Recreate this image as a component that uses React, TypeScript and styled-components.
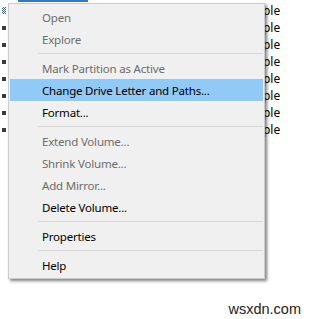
import React from "react";
import styled, { createGlobalStyle } from "styled-components";

const Global = createGlobalStyle`
  html, body { margin: 0; padding: 0; background: #ffffff; }
  body { width: 312px; height: 319px; overflow: hidden; font-family: "Noto Sans", "Open Sans", sans-serif; }
`;

const Page = styled.div`
  position: relative;
  width: 312px;
  height: 319px;
  background: #ffffff;
  overflow: hidden;
`;

const ListTop = styled.div`
  height: 2px;
  display: flex;
`;

const SelectedStrip = styled.div`
  margin-left: 18px;
  width: 70px;
  height: 2px;
  background: #2f7bcc;
`;

const Row = styled.div`
  height: 17px;
  display: flex;
  align-items: center;
  font-size: 12px;
  color: #000;
`;

const RowIcon = styled.div<{ $dithered?: boolean }>`
  margin-left: 2px;
  width: 4px;
  height: ${(p) => (p.$dithered ? "7px" : "4px")};
  background: ${(p) =>
    p.$dithered
      ? "repeating-conic-gradient(#3a5fa8 0 25%, #ffffff 0 50%) 0 0 / 2px 2px"
      : "#3c3c3c"};
`;

const RowText = styled.span`
  margin-left: 236px;
  white-space: nowrap;
`;

const Menu = styled.div`
  position: absolute;
  left: 8px;
  top: 3px;
  width: 257px;
  box-sizing: border-box;
  background: #f0f0f0;
  border: 1px solid #cdcdcd;
  padding: 2px 1px 2px 1px;
  box-shadow: 2px 2px 3px rgba(0, 0, 0, 0.5);
`;

const Item = styled.div<{ $disabled?: boolean; $active?: boolean }>`
  height: 22px;
  display: flex;
  align-items: center;
  padding-left: 32px;
  font-size: 11.5px;
  letter-spacing: -0.2px;
  color: ${(p) => (p.$disabled ? "#6d6d6d" : "#000000")};
  background: ${(p) => (p.$active ? "#91c9f7" : "transparent")};
  white-space: nowrap;
`;

const Separator = styled.div`
  height: 7px;
  display: flex;
  align-items: center;
  padding-left: 28px;
  &::after {
    content: "";
    flex: 1;
    height: 1px;
    background: #d7d7d7;
  }
`;

const Watermark = styled.div`
  position: absolute;
  right: 11px;
  bottom: 2px;
  font-family: "Liberation Sans", Arial, sans-serif;
  font-size: 14.5px;
  color: #222;
`;

type Entry = { label?: string; disabled?: boolean; active?: boolean; sep?: boolean };

const entries: Entry[] = [
  { label: "Open", disabled: true },
  { label: "Explore", disabled: true },
  { sep: true },
  { label: "Mark Partition as Active", disabled: true },
  { label: "Change Drive Letter and Paths...", active: true },
  { label: "Format..." },
  { sep: true },
  { label: "Extend Volume...", disabled: true },
  { label: "Shrink Volume...", disabled: true },
  { label: "Add Mirror...", disabled: true },
  { label: "Delete Volume..." },
  { sep: true },
  { label: "Properties" },
  { sep: true },
  { label: "Help" },
];

export default function App() {
  return (
    <Page>
      <Global />
      <ListTop>
        <SelectedStrip />
      </ListTop>
      {Array.from({ length: 8 }).map((_, i) => (
        <Row key={i}>
          <RowIcon $dithered={i === 0} />
          <RowText>Simple</RowText>
        </Row>
      ))}
      <Menu>
        {entries.map((e, i) =>
          e.sep ? (
            <Separator key={i} />
          ) : (
            <Item key={i} $disabled={e.disabled} $active={e.active}>
              {e.label}
            </Item>
          )
        )}
      </Menu>
      <Watermark>wsxdn.com</Watermark>
    </Page>
  );
}
